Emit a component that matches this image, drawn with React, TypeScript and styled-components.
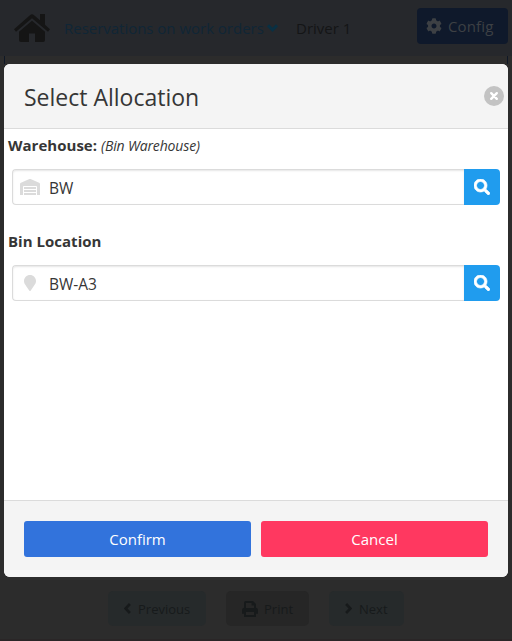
import React from 'react';
import styled, { createGlobalStyle } from 'styled-components';
import { FaCog, FaMapMarker, FaSearch, FaWarehouse } from 'react-icons/fa';

const GlobalStyle = createGlobalStyle`
  * { box-sizing: border-box; }
  html, body { margin: 0; padding: 0; overflow: hidden; }
  body {
    background: #2c2c2c;
    color: #363636;
    font-family: "Open Sans", "Noto Sans", sans-serif;
    font-size: 15px;
  }
  button, input { font: inherit; letter-spacing: inherit; }
  svg { display: block; flex: none; }
`;

const Screen = styled.div`
  width: 512px;
  height: 641px;
  display: flex;
  flex-direction: column;
  background: #2c2c2c;
  border-bottom: 2px solid #2a2627;
`;

const TopBar = styled.header`
  height: 56px;
  flex: none;
  display: flex;
  align-items: center;
  padding: 0 4px 0 14px;
  background: #26282c;
`;

const WorkArea = styled.div`
  height: 8px;
  margin: 0 4px;
  border: solid #0f1826;
  border-width: 0 1px;
`;

const Text = styled.span<{ $size?: number; $spacing?: number; $color?: string }>`
  font-size: ${p => p.$size ?? 15}px;
  letter-spacing: ${p => p.$spacing ?? 0}px;
  ${p => p.$color && `color: ${p.$color};`}
  white-space: nowrap;
`;

const MenuLink = styled.a`
  display: flex;
  align-items: center;
  gap: 3px;
  width: 232px;
  margin-left: 14px;
  color: #102636;
`;

const ConfigButton = styled.button`
  margin: -4px 0 0 auto;
  width: 91px;
  height: 36px;
  padding: 0 0 0 9px;
  display: flex;
  align-items: center;
  gap: 6px;
  border: 0;
  border-radius: 4px;
  background: #0f192b;
  color: #3d4044;
`;

const Modal = styled.section`
  width: 504px;
  height: 513px;
  flex: none;
  margin: 0 4px;
  display: flex;
  flex-direction: column;
  overflow: hidden;
  border-radius: 6px;
  background: #fff;
`;

const ModalHead = styled.header`
  height: 65px;
  flex: none;
  display: flex;
  align-items: center;
  justify-content: space-between;
  padding: 0 4px 0 20px;
  background: #f4f4f4;
  border-bottom: 1px solid #dbdbdb;
`;

const Title = styled.h1`
  margin: 0;
  padding-top: 1px;
  font-size: 23px;
  font-weight: 400;
  line-height: 24px;
`;

const CloseButton = styled.button`
  width: 20px;
  height: 20px;
  padding: 0;
  border: 0;
  border-radius: 50%;
  background: #c3c3c3;
`;

const ModalBody = styled.div`
  flex: 1;
  padding: 4px 4px 0;
`;

const Field = styled.div`
  height: 96px;
`;

const Label = styled.label`
  display: flex;
  align-items: baseline;
  gap: 4px;
  height: 24px;
  line-height: 24px;
  font-weight: 700;
`;

const Hint = styled.em`
  font-size: 14px;
  font-weight: 400;
  letter-spacing: -0.15px;
`;

const InputRow = styled.div`
  display: flex;
  height: 36px;
  margin: 12px 4px 0;
`;

const InputBox = styled.div`
  flex: 1;
  display: flex;
  align-items: center;
  border: 1px solid #dbdbdb;
  border-right: 0;
  border-radius: 4px 0 0 4px;
  box-shadow: inset 0 1px 2px rgba(10, 10, 10, 0.1);
`;

const InputIcon = styled.span`
  width: 36px;
  padding-right: 2px;
  display: flex;
  justify-content: center;
  color: #dbdbdb;
`;

const WarehouseIcon = styled(FaWarehouse)`
  width: 20px;
  height: 16px;
`;

const Input = styled.input`
  flex: 1;
  min-width: 0;
  padding: 2px 0 0;
  border: 0;
  outline: 0;
  background: transparent;
  color: #363636;
  font-size: 15.5px;
  letter-spacing: 0;
`;

const SearchButton = styled.button`
  width: 36px;
  height: 36px;
  padding: 0;
  display: flex;
  align-items: center;
  justify-content: center;
  border: 0;
  border-radius: 0 4px 4px 0;
  background: #209cee;
  color: #fff;
`;

const SearchIcon = styled(FaSearch)`
  width: 16px;
  height: 16px;
  stroke: currentColor;
  stroke-width: 22;
`;

const ModalFoot = styled.footer`
  height: 77px;
  flex: none;
  display: flex;
  gap: 10px;
  padding: 20px;
  background: #f4f4f4;
  border-top: 1px solid #dbdbdb;
`;

const ActionButton = styled.button<{ $tone: string }>`
  flex: 1;
  height: 36px;
  padding: 0 0 1px;
  border: 0;
  border-radius: 3px;
  background: ${p => p.$tone};
  color: #fff;
`;

const Pager = styled.nav`
  display: flex;
  gap: 20px;
  padding: 14px 0 0 108px;
`;

const PagerButton = styled.button<{ $width: number; $neutral?: boolean; $gap: number }>`
  width: ${p => p.$width}px;
  height: 35px;
  padding: 0 0 0 16px;
  display: flex;
  align-items: center;
  gap: ${p => p.$gap}px;
  border: 0;
  border-radius: 5px;
  background: ${p => (p.$neutral ? '#262626' : '#262a2b')};
  color: #171a1b;
`;

const HomeIcon = () => (
  <svg width="36" height="28" viewBox="0 0 36 28" fill="#151515">
    <path d="M0 15.2 16.2.9Q18 -.6 19.8.9L26 6.3V0h5v10.7l5 4.5-2 2.5L18 4.2 2 17.7Z" />
    <path d="M18 6.8 31 17.7V26q0 2-2 2h-8v-8.5h-6V28H7q-2 0-2-2v-8.3Z" />
  </svg>
);

const CloseIcon = () => (
  <svg width="20" height="20" viewBox="0 0 20 20" fill="none" stroke="#fff" strokeWidth="2.4" strokeLinecap="round">
    <path d="m7.2 7.2 5.6 5.6m0-5.6-5.6 5.6" />
  </svg>
);

const ChevronDown = () => (
  <svg width="11" height="8" viewBox="0 0 11 8" fill="none" stroke="#0a3043" strokeWidth="3">
    <path d="m1 1.3 4.5 4.5L10 1.3" />
  </svg>
);

const ChevronSide = ({ next = false }: { next?: boolean }) => (
  <svg width="7" height="11" viewBox="0 0 7 11" fill="none" stroke="currentColor" strokeWidth="2.7">
    <path d={next ? 'm1.1 1 4.3 4.5L1.1 10' : 'M5.9 1 1.6 5.5 5.9 10'} />
  </svg>
);

const PrinterIcon = () => (
  <svg width="16" height="16" viewBox="0 0 16 16" fill="currentColor">
    <path d="M3.8 0H11l3 3v3.8q2 .4 2 2.2v3.8h-2V16H2v-3.2H0V9q0-1.8 2-2.2V1.8Q2 0 3.8 0ZM4 2v5h8V4.4h-2.4V2Zm0 9v3h8v-3Z" fillRule="evenodd" />
  </svg>
);

interface LookupProps { label: string; hint?: string; value: string; icon: React.ReactNode }

const LookupField = ({ label, hint, value, icon }: LookupProps) => (
  <Field>
    <Label><Text $spacing={0.02}>{label}</Text>{hint && <Hint>{hint}</Hint>}</Label>
    <InputRow>
      <InputBox><InputIcon>{icon}</InputIcon><Input defaultValue={value} aria-label={label} /></InputBox>
      <SearchButton aria-label="Search"><SearchIcon /></SearchButton>
    </InputRow>
  </Field>
);

export default function App() {
  return (
    <>
      <GlobalStyle />
      <Screen>
        <TopBar>
          <HomeIcon />
          <MenuLink>
            <Text $spacing={-0.02}>Reservations on work orders</Text>
            <ChevronDown />
          </MenuLink>
          <Text $color="#141516">Driver 1</Text>
          <ConfigButton><FaCog size={16} /><Text $spacing={0.15}>Config</Text></ConfigButton>
        </TopBar>
        <WorkArea />
        <Modal role="dialog" aria-label="Select Allocation">
          <ModalHead>
            <Title>Select Allocation</Title>
            <CloseButton aria-label="Close"><CloseIcon /></CloseButton>
          </ModalHead>
          <ModalBody>
            <LookupField label="Warehouse:" hint="(Bin Warehouse)" value="BW" icon={<WarehouseIcon />} />
            <LookupField label="Bin Location" value="BW-A3" icon={<FaMapMarker size={16} />} />
          </ModalBody>
          <ModalFoot>
            <ActionButton $tone="#3273dc"><Text>Confirm</Text></ActionButton>
            <ActionButton $tone="#ff3860"><Text>Cancel</Text></ActionButton>
          </ModalFoot>
        </Modal>
        <Pager>
          <PagerButton $width={98} $gap={7}><ChevronSide /><Text $size={13}>Previous</Text></PagerButton>
          <PagerButton $width={83} $gap={6} $neutral><PrinterIcon /><Text $size={13}>Print</Text></PagerButton>
          <PagerButton $width={75} $gap={7}><ChevronSide next /><Text $size={13}>Next</Text></PagerButton>
        </Pager>
      </Screen>
    </>
  );
}
